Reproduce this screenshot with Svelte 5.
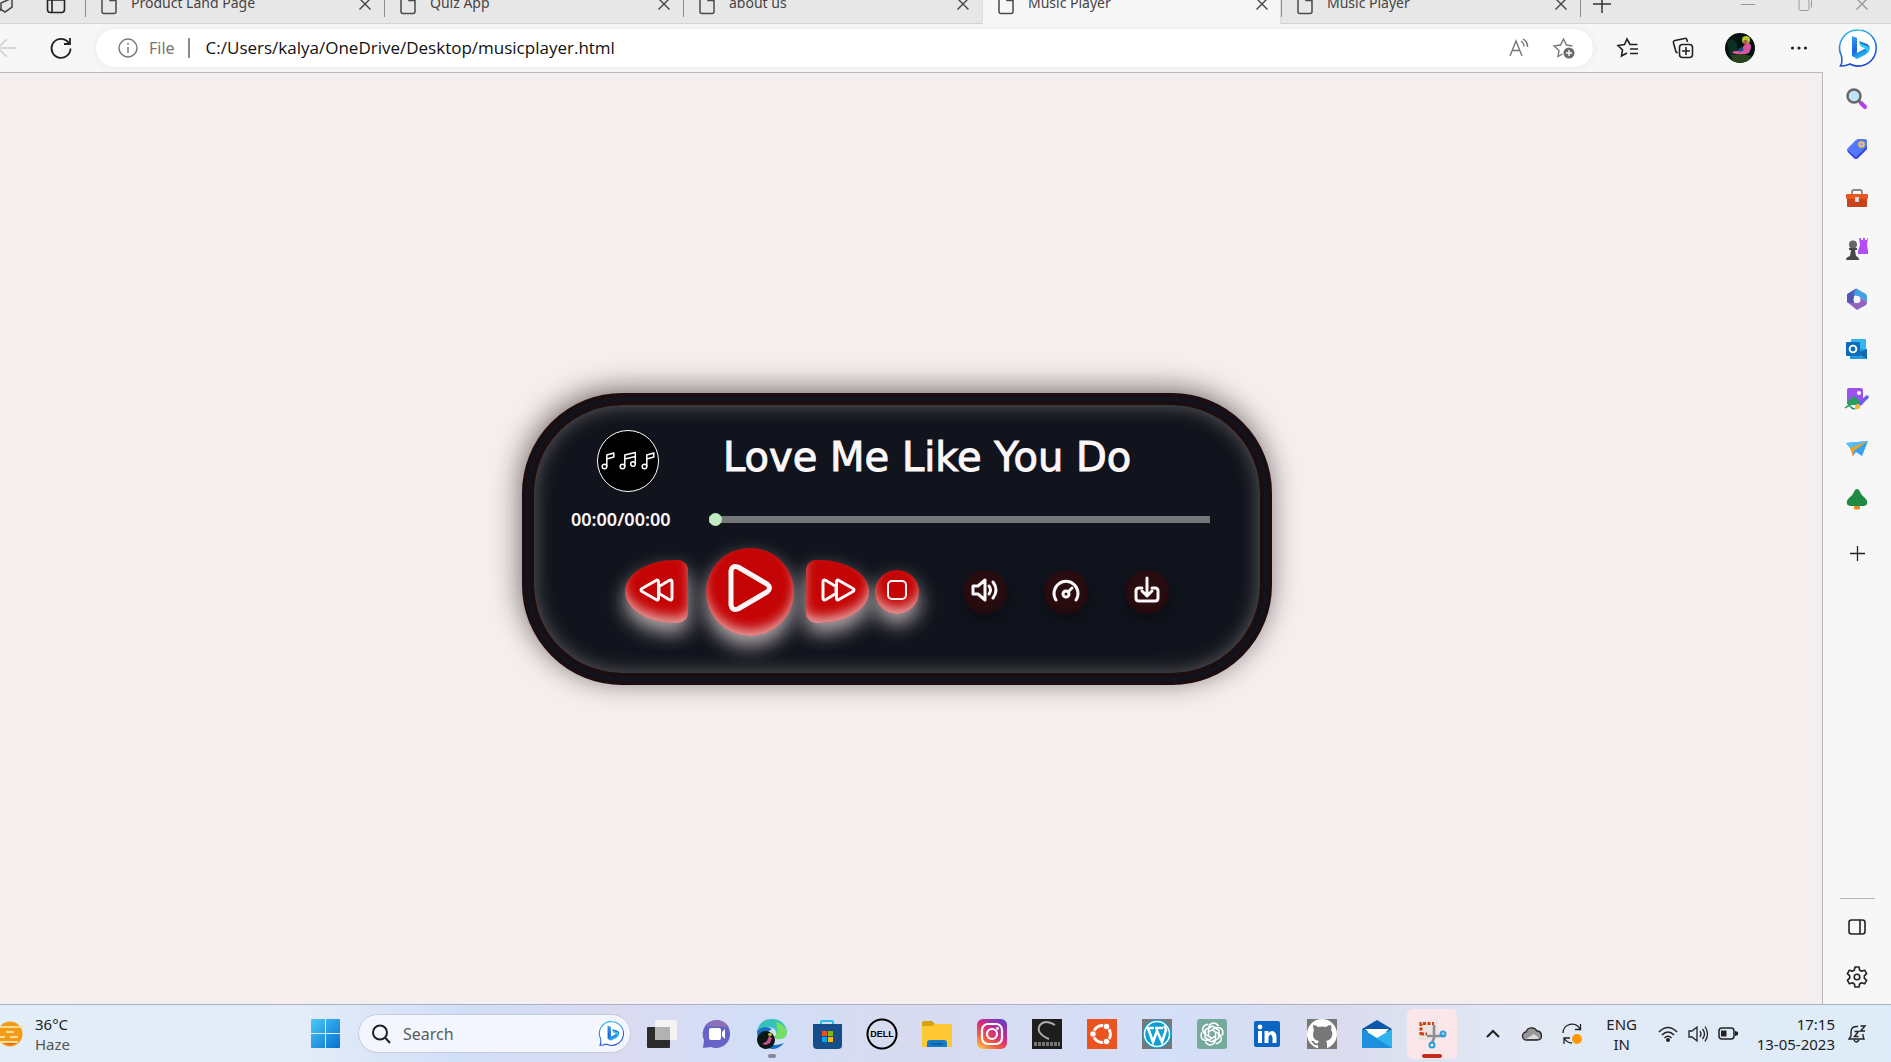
<script>
  const tabs = [
    { title: 'Product Land Page' },
    { title: 'Quiz App' },
    { title: 'about us' },
    { title: 'Music Player', active: true },
    { title: 'Music Player' }
  ];
  let position = $state(0);
</script>

{#snippet bing(size, id)}
  <svg width={size} height={size} viewBox="0 0 38 38">
    <defs>
      <linearGradient id="{id}r" x1="0" y1="0" x2="0.3" y2="1">
        <stop offset="0" stop-color="#2cc4f2" /><stop offset="1" stop-color="#1b48d2" />
      </linearGradient>
      <linearGradient id="{id}b" x1="0" y1="0" x2="0.4" y2="1">
        <stop offset="0" stop-color="#35a2f5" /><stop offset="0.6" stop-color="#1a62e0" /><stop offset="1" stop-color="#2bc0ee" />
      </linearGradient>
    </defs>
    <path d="M19.500 1A18 18 0 1 1 11 35C8 36.500 4 37 1.500 37C3.500 34 3 30 2.500 27A18 18 0 0 1 19.500 1Z" fill="#fff" stroke="url(#{id}r)" stroke-width="1.600" />
    <path d="M13 7l5 2v15l9-5-5-2-2-5 8 3q4 2 2 7-1 2-4 4l-8 4-5-3Z" fill="url(#{id}b)" />
    <path d="M20 14l8 3q3 3 1 7-1-4-5-5.500l-2-1Z" fill="#2fd0e6" />
  </svg>
{/snippet}

{#snippet cross(color)}
  <svg width="14" height="14" viewBox="0 0 14 14" fill="none" stroke={color} stroke-width="1.400"><path d="M1.500 1.500l11 11M12.500 1.500l-11 11" /></svg>
{/snippet}

<div class="desktop">
  <header class="tabstrip">
    <div class="tabstrip-lead">
      <svg width="18" height="20" viewBox="0 0 18 20" fill="none" stroke="#444" stroke-width="1.500"><path d="M1 4l9-3 6 3v9l-7 5-5-3" /><path d="M5 17V9l9-4" /></svg>
      <svg width="20" height="20" viewBox="0 0 20 20" fill="none" stroke="#222" stroke-width="1.600"><rect x="1.500" y="1.500" width="17" height="17" rx="3" /><path d="M6 2v16M2 6h16" /></svg>
    </div>
    {#each tabs as tab}
      <div class="tab" class:active={tab.active}>
        <svg width="18" height="22" viewBox="0 0 18 22" fill="none" stroke="#4a4a4a" stroke-width="1.500"><path d="M3.500 1.500h7l5.500 5.500v11.500a2 2 0 0 1-2 2h-10a2 2 0 0 1-2-2v-15a2 2 0 0 1 1.500-2ZM10 2v5.500h6" /></svg>
        <button class="tab-title">{tab.title}</button>
        <button class="bare" aria-label="Close tab">{@render cross('#444')}</button>
      </div>
    {/each}
    <button class="bare new-tab" aria-label="New tab">
      <svg width="18" height="18" viewBox="0 0 18 18" stroke="#333" stroke-width="1.500"><path d="M9 0v18M0 9h18" /></svg>
    </button>
    <div class="window-buttons">
      <button class="bare" aria-label="Minimize"><svg width="14" height="14" viewBox="0 0 14 14" stroke="#999"><path d="M0 7.500h14" /></svg></button>
      <button class="bare" aria-label="Restore"><svg width="14" height="14" viewBox="0 0 14 14" fill="none" stroke="#999"><rect x="1" y="2.500" width="10" height="11" rx="2" /><path d="M3.500 .5h7a3 3 0 0 1 3 3v7" /></svg></button>
      <button class="bare" aria-label="Close">{@render cross('#999')}</button>
    </div>
  </header>

  <div class="toolbar">
    <button class="bare back" aria-label="Back">
      <svg width="20" height="20" viewBox="0 0 20 20" fill="none" stroke="#ccc" stroke-width="1.500"><path d="M20 10H2M11 1l-9 9 9 9" /></svg>
    </button>
    <button class="bare reload" aria-label="Reload">
      <svg width="22" height="22" viewBox="0 0 22 22" fill="none" stroke="#222" stroke-width="1.800"><path d="M20.500 11.500A9.500 9.500 0 1 1 17 4l3 3" /><path d="M20 1v6h-6" /></svg>
    </button>
    <div class="address">
      <svg width="20" height="20" viewBox="0 0 20 20" fill="none" stroke="#767676" stroke-width="1.400"><circle cx="10" cy="10" r="9" /><path d="M10 9v6M10 5v2" /></svg>
      <span class="scheme">File</span>
      <input class="url" aria-label="Address" value="C:/Users/kalya/OneDrive/Desktop/musicplayer.html" />
      <button class="bare" aria-label="Read aloud">
        <svg width="20" height="20" viewBox="0 0 20 20" fill="none" stroke="#767676" stroke-width="1.400"><path d="M1 18L7 3l6 15M3.500 12.500h7M12 3q3 2 3 5.500M14 1q5 3 4.500 8" /></svg>
      </button>
      <button class="bare" aria-label="Add to favorites">
        <svg width="22" height="22" viewBox="0 0 22 22" fill="none" stroke="#767676" stroke-width="1.400"><path d="M9.500 17L5 19.500l1-6-5-4.500 6.500-1L10.500 2l3 6 6 1" /><circle cx="16" cy="16" r="5.500" fill="#6b6b6b" stroke="none" /><path d="M16 13v6M13 16h6" stroke="#fff" /></svg>
      </button>
    </div>
    <div class="tools">
      <button class="bare" aria-label="Favorites"><svg width="22" height="22" viewBox="0 0 22 22" fill="none" stroke="#222" stroke-width="1.600"><path d="M10 16l-5.500 3 1-6-4.500-4.500 6.500-1L10 2l3 5.500h7.500M13 12h8M13 16.500h8" /></svg></button>
      <button class="bare" aria-label="Collections"><svg width="22" height="22" viewBox="0 0 22 22" fill="none" stroke="#222" stroke-width="1.600"><rect x="7.500" y="7.500" width="13" height="13" rx="3" /><path d="M14 10v8M10 14h8M15.500 5L15 3q-.5-2-2.500-1.500L3 3.500Q1 4 1.500 6l2.500 9 1.500 1" /></svg></button>
      <button class="bare" aria-label="Profile">
        <svg width="30" height="30" viewBox="0 0 30 30"><clipPath id="face"><circle cx="15" cy="15" r="15" /></clipPath><g clip-path="url(#face)"><path fill="#06120f" d="M0 0h30v30H0z" /><path d="M2 8Q8 4 12 10v8l-7 6Z" fill="#0d3026" /><path d="M19 12l4-2q4 1 3 5l-2 5q-7 3-13 1l-4-1 2-2h7Z" fill="#d854a0" /><circle cx="21" cy="7" r="4" fill="#b8c62a" /><circle cx="20.500" cy="9" r="2.300" fill="#a5663d" /><path d="M6 22l12-1 8 2-4 7H8Z" fill="#27431c" /><path d="M12 17l5-3 2 3-4 2Z" fill="#1c4c85" /></g></svg>
      </button>
      <button class="bare" aria-label="Settings and more"><svg width="18" height="18" viewBox="0 0 18 18" fill="#222"><circle cx="2.500" cy="9" r="1.600" /><circle cx="9" cy="9" r="1.600" /><circle cx="15.500" cy="9" r="1.600" /></svg></button>
    </div>
    <button class="bare bing" aria-label="Bing">{@render bing(38, 'top')}</button>
  </div>

  <div class="body">
    <main class="page">
      <section class="player">
        <div class="cover">
          <svg width="54" height="20" viewBox="0 0 54 20" fill="none" stroke="#fff" stroke-width="1.500" stroke-linejoin="round"><circle cx="3.500" cy="15.500" r="2.300" /><path d="M5.800 15.500V4l7-2v4l-7 2" /><circle cx="21.500" cy="15.500" r="2.300" /><circle cx="32" cy="13" r="2.300" /><path d="M23.800 15.500V4l10.500-2.500V13M23.800 8l10.500-2.500" /><circle cx="43.500" cy="15.500" r="2.300" /><path d="M45.800 15.500V4l7-2v4l-7 2" /></svg>
        </div>
        <h1>Love Me Like You Do</h1>
        <span class="time">00:00/00:00</span>
        <input class="seek" type="range" min="0" max="100" bind:value={position} aria-label="Seek" />
        <div class="controls">
          <button class="key rewind" aria-label="Rewind"><svg width="36" height="24" viewBox="0 0 36 24"><path d="M17.500 2.200L3 10.500q-2 1.500 0 3L17.500 21.800q2 .5 2-1.500V3.700q0-2-2-1.500ZM33 4q0-3-3-1.500L20 8.500v7l10 6q3 1.500 3-1.500Z" /></svg></button>
          <button class="key play" aria-label="Play"><svg width="46" height="50" viewBox="0 0 46 50" stroke-width="5"><path d="M4 8v34q1 6 7 4l29-17q5-4 0-8L11 4q-6-2-7 4Z" /></svg></button>
          <button class="key forward" aria-label="Fast forward"><svg width="36" height="24" viewBox="0 0 36 24"><path d="M18.500 2.200L33 10.500q2 1.500 0 3L18.500 21.800q-2 .5-2-1.500V3.700q0-2 2-1.500ZM3 4q0-3 3-1.500L16 8.500v7l-10 6q-3 1.500-3-1.500Z" /></svg></button>
          <button class="key small" aria-label="Stop"><svg width="22" height="22" viewBox="0 0 22 22" stroke-width="2"><rect x="2" y="2" width="18" height="18" rx="4" /></svg></button>
          <div class="extras">
            <button class="key small dim" aria-label="Volume"><svg width="28" height="24" viewBox="0 0 28 24"><path d="M2 8h5l7-6v20l-7-6H2ZM18 8q3 4 0 8M22 4q6 8 0 16" /></svg></button>
            <button class="key small dim" aria-label="Speed"><svg width="28" height="24" viewBox="0 0 28 24"><path d="M4 22A12 12 0 1 1 24 22M16 14l4-4" /><circle cx="14" cy="16" r="3" /></svg></button>
            <button class="key small dim" aria-label="Download"><svg width="26" height="28" viewBox="0 0 26 28"><path d="M8 12H5q-3 0-3 3v7q0 3 3 3h16q3 0 3-3v-7q0-3-3-3h-3M13 2v17M8 15l5 5 5-5" /></svg></button>
          </div>
        </div>
      </section>
    </main>

    <aside class="sidebar">
      <button class="bare" aria-label="Search"><svg width="22" height="22" viewBox="0 0 22 22"><path d="M14.500 14.500l4.500 4.500" stroke="#b83df0" stroke-width="4" stroke-linecap="round" /><path d="M12 12l3 3" stroke="#777" stroke-width="2.500" /><circle cx="8" cy="8" r="6.500" fill="#bfe3fa" stroke="#666" stroke-width="2.400" /></svg></button>
      <button class="bare" aria-label="Shopping"><svg width="22" height="22" viewBox="0 0 22 22"><path d="M12 1h7q2 0 2 2v7q0 1-1 2l-8 8q-2 2-4 0l-6-6q-2-2 0-4l8-8Z" fill="#5478ff" /><path d="M1.500 12l8.500 7 11-11v3l-9 9q-2 2-4 0l-6-6Z" fill="#3a48e2" /><circle cx="15.500" cy="6.500" r="2.500" fill="#9aa8ff" stroke="#ffc52b" stroke-width="1.600" /></svg></button>
      <button class="bare" aria-label="Tools"><svg width="24" height="20" viewBox="0 0 24 20"><path d="M7 6V3q0-2 2-2h6q2 0 2 2v3" fill="none" stroke="#888" stroke-width="1.800" /><rect x="1" y="5" width="22" height="5" rx="1" fill="#e6581f" /><path d="M2 10h20v7q0 1-1 1H3q-1 0-1-1Z" fill="#c8421a" /><rect x="10" y="8" width="4" height="5" rx="1" fill="#ddd" /></svg></button>
      <button class="bare" aria-label="Games"><svg width="24" height="24" viewBox="0 0 24 24"><path d="M14 1h2v2h2V1h2v2h2V1h1l-1 7 1 6v3H13v-3l2-6Z" fill="#b44df5" /><circle cx="8" cy="7.500" r="4" fill="#666" /><path d="M4 11h8v2h-2l1 6q3 1 3 4H1q0-3 4-4l1-6H4Z" fill="#484848" /></svg></button>
      <button class="bare" aria-label="Microsoft 365"><svg width="22" height="22" viewBox="0 0 22 22"><path d="M1 6l9-5.500 5 3L8 8v7l-2 2-5-3Z" fill="#5257b5" /><path d="M10 .5l10 5.500q1 1 1 3v5l-7-5-6-2V5Z" fill="#3fa0e4" /><path d="M1 14l5 1 8-1V9l7 5q0 2-1 3l-9 5Z" fill="#9264c0" /><circle cx="11" cy="11.500" r="3.500" fill="#f7f7f7" /></svg></button>
      <button class="bare" aria-label="Outlook"><svg width="22" height="22" viewBox="0 0 22 22"><path d="M5 1h15v10H5Z" fill="#35b6ee" /><path d="M4 11h17v10H4Z" fill="#2199e0" /><path d="M21 11v10L12 15Z" fill="#1666aa" /><rect y="4" width="14" height="14" rx="1" fill="#0f6cbd" /><circle cx="7" cy="11" r="3.400" fill="none" stroke="#fff" stroke-width="1.900" /></svg></button>
      <button class="bare" aria-label="Image creator"><svg width="24" height="24" viewBox="0 0 24 24"><rect x="2" y="1" width="16" height="17" rx="2" fill="#9b52ee" /><path d="M2 15l7-6 8 7-3 2H3Z" fill="#23a05c" /><circle cx="14" cy="6" r="2" fill="#fff" /><path d="M0 21q5-4 6-1 2 3 5 1" fill="none" stroke="#269b63" stroke-width="1.500" /><path d="M15 17l7-7" stroke="#6d5bef" stroke-width="3.500" stroke-linecap="round" /><path d="M10 22q0-5 3-5t2 4q-2 2-5 1Z" fill="#f5b53c" /></svg></button>
      <button class="bare" aria-label="Drop"><svg width="22" height="18" viewBox="0 0 22 18"><path d="M0 3l22-2-6 15-6-4-3 4-2-7Z" fill="#389ff5" /><path d="M4 8L22 1 8 11l-1 6Z" fill="#eba423" /><path d="M0 3l22-2L4 8Z" fill="#58bdf8" /></svg></button>
      <button class="bare" aria-label="E-tree"><svg width="22" height="22" viewBox="0 0 22 22"><path d="M8 15h6v6q-3 1-6 0Z" fill="#e88b20" /><path d="M9 2q2-2 4 0 2 5 6 8 3 3 2 6-1 2-5 2H6q-4 0-5-2-1-3 2-6 4-3 6-8Z" fill="#208a42" /></svg></button>
      <button class="bare add" aria-label="Customize"><svg width="15" height="15" viewBox="0 0 15 15" stroke="#222" stroke-width="1.300"><path d="M7.500 0v15M0 7.500h15" /></svg></button>
      <hr />
      <button class="bare" aria-label="Hide sidebar"><svg width="18" height="16" viewBox="0 0 18 16" fill="none" stroke="#222" stroke-width="1.600"><rect x="1" y="1" width="16" height="14" rx="2.500" /><path d="M12 1v14" /></svg></button>
      <button class="bare" aria-label="Settings"><svg width="22" height="22" viewBox="0 0 22 22" fill="none" stroke="#222" stroke-width="1.600" stroke-linejoin="round"><path d="M9 1h4l.6 3 2 1.200 3-1 2 3.400-2.300 2.200v2.400l2.300 2.200-2 3.400-3-1-2 1.200-.6 3H9l-.6-3-2-1.200-3 1-2-3.400 2.300-2.200V9.800L1.400 7.600l2-3.400 3 1 2-1.200Z" /><circle cx="11" cy="11" r="2.800" /></svg></button>
    </aside>
  </div>

  <footer class="taskbar">
    <div class="weather">
      <svg width="30" height="28" viewBox="0 0 30 28"><circle cx="16" cy="14" r="12.500" fill="#f39a17" /><path d="M7 21a12.500 12.500 0 0 0 18 0Z" fill="#e2660f" /><path d="M0 7h29M12 12h8M2 17h9M16 17h8M6 22h18" stroke="#fbdc96" stroke-width="1.800" /></svg>
      <div><p>36°C</p><p class="soft">Haze</p></div>
    </div>
    <button class="bare start" aria-label="Start"><svg width="29" height="29" viewBox="0 0 29 29"><defs><linearGradient id="win" x1="0" y1="0" x2="1" y2="1"><stop offset="0" stop-color="#4cc9f9" /><stop offset="1" stop-color="#0670cd" /></linearGradient></defs><path fill="url(#win)" d="M1 0h13v14H0V1q0-1 1-1ZM15 0h13q1 0 1 1v13H15ZM0 15h14v14H1q-1 0-1-1ZM15 15h14v13q0 1-1 1H15Z" /></svg></button>
    <label class="search">
      <svg width="19" height="20" viewBox="0 0 19 20" fill="none" stroke="#222" stroke-width="2"><circle cx="8" cy="8.500" r="7" /><path d="M13 13.500l5 5.500" /></svg>
      <input type="search" placeholder="Search" aria-label="Search" />
      {@render bing(25, 'search')}
    </label>
    <div class="apps">
      <button class="app" aria-label="Task view"><svg width="30" height="30" viewBox="0 0 30 30"><rect y="8" width="23" height="21" rx="1" fill="#2c2c2c" /><rect x="8" y="1" width="22" height="20" rx="1" fill="#f4f4f4" /><path d="M8 8h15v13H8Z" fill="#b2b2b2" /></svg></button>
      <button class="app" aria-label="Chat"><svg width="30" height="30" viewBox="0 0 30 30"><path d="M15 1a14 14 0 1 1-6 27L1 29l1-8A14 14 0 0 1 15 1Z" fill="#6562c8" /><path d="M4 7q4-6 11-6t12 7Z" fill="#8e6fb9" /><rect x="7" y="9" width="12" height="12" rx="2" fill="#fff" /><path d="M20 13l3-3v10l-3-3Z" fill="#fff" /></svg></button>
      <button class="app open" aria-label="Edge"><svg width="30" height="30" viewBox="0 0 30 30"><path d="M0 12Q3 0 15 0t15 12q0 9-10 8-3-1-1-4 1-8-8-8-7 0-11 4Z" fill="#35c2bb" /><path d="M19 3q11 3 11 11-2 7-10 6-3-1-1-4 2-6 0-13Z" fill="#74df62" /><path d="M0 12q7-7 15-2-8 4-5 12 5 7 17 2-5 6-12 6Q0 28 0 12Z" fill="#176fc3" /><circle cx="9" cy="21" r="9" fill="#0b1713" /><path d="M5 25l5-3 2-5 3 2-2 5-4 2Z" fill="#c9508f" /><circle cx="13" cy="15.500" r="1.800" fill="#b6c432" /></svg></button>
      <button class="app" aria-label="Microsoft Store"><svg width="30" height="30" viewBox="0 0 30 30"><path d="M9 6V3q0-1 1-1h10q1 0 1 1v3" fill="none" stroke="#25bdf1" stroke-width="2" /><path d="M1 5h29v21q0 4-4 4H5q-4 0-4-4Z" fill="#174d88" /><path d="M10 12h5v5h-5Z" fill="#f25022" /><path d="M16 12h5v5h-5Z" fill="#7fba00" /><path d="M10 18h5v5h-5Z" fill="#00a4ef" /><path d="M16 18h5v5h-5Z" fill="#ffb900" /></svg></button>
      <button class="app dell" aria-label="Dell">DELL</button>
      <button class="app" aria-label="File Explorer"><svg width="30" height="30" viewBox="0 0 30 30"><path d="M0 4q0-2 2-2h8l3 3h15q2 0 2 2v3H0Z" fill="#dca008" /><path d="M0 7h10l3-2h17v23H0Z" fill="#fec934" /><path d="M5 28v-4q0-3 3-3h14q3 0 3 3v4Z" fill="#147cc8" /><path d="M9 25h12" stroke="#0a559a" stroke-width="1.500" /></svg></button>
      <button class="app" aria-label="Instagram"><svg width="30" height="30" viewBox="0 0 30 30"><defs><linearGradient id="ig" x1="0.100" y1="1" x2="0.800" y2="0"><stop offset="0" stop-color="#ffc64d" /><stop offset="0.300" stop-color="#f4603f" /><stop offset="0.600" stop-color="#d02a83" /><stop offset="1" stop-color="#6a3cc8" /></linearGradient></defs><rect width="30" height="30" rx="6" fill="url(#ig)" /><g fill="none" stroke="#fff" stroke-width="2.200"><rect x="5" y="5" width="20" height="20" rx="6" /><circle cx="15" cy="15" r="5" /></g><circle cx="20.500" cy="9.500" r="1.400" fill="#fff" /></svg></button>
      <button class="app" aria-label="Cyber"><svg width="30" height="30" viewBox="0 0 30 30"><path fill="#1d1d1d" d="M0 0h30v30H0z" /><path d="M23 6Q13 0 8 6q-5 8 9 14" fill="none" stroke="#aaa" stroke-width="2" /><path d="M2 25h26" stroke="#777" stroke-width="4" stroke-dasharray="3 1" /></svg></button>
      <button class="app" aria-label="Ubuntu"><svg width="30" height="30" viewBox="0 0 30 30"><path fill="#e95420" d="M0 0h30v30H0z" /><circle cx="15" cy="15" r="8.500" fill="none" stroke="#fff" stroke-width="3" /><g fill="#fff" stroke="#e95420"><circle cx="6" cy="15" r="3.300" /><circle cx="19.500" cy="7.500" r="3.300" /><circle cx="19.500" cy="22.500" r="3.300" /></g></svg></button>
      <button class="app" aria-label="WordPress"><svg width="30" height="30" viewBox="0 0 30 30"><path fill="#777" d="M0 0h30v30H0z" /><circle cx="15" cy="15" r="14.500" fill="#109fd2" /><circle cx="15" cy="15" r="12.500" fill="none" stroke="#fff" stroke-width="1.500" /><path d="M4 9h8M13 9h8M6 9l5 14 4-11 5 11 4-12q0-2-2-4" fill="none" stroke="#fff" stroke-width="2.600" /></svg></button>
      <button class="app" aria-label="ChatGPT"><svg width="30" height="30" viewBox="0 0 30 30"><rect width="30" height="30" rx="3" fill="#75a99c" /><g fill="none" stroke="#fff" stroke-width="1.500">{#each [0, 60, 120, 180, 240, 300] as turn}<path transform="rotate({turn} 15 15)" d="M11.500 17v-7.500q.5-4.500 4.500-5.500 3.500 0 5.500 3M11.500 9.500l4-2.300 6 3.400" />{/each}</g></svg></button>
      <button class="app" aria-label="LinkedIn"><svg width="28" height="28" viewBox="0 0 28 28"><rect x="1" y="1" width="26" height="26" rx="2" fill="#0a66c2" /><g fill="#fff"><circle cx="7" cy="7" r="2.400" /><path d="M5 11h4v12H5ZM11.500 11h4v2q4-4 7 0 1 2 1 4v6h-4v-6q-2-5-4 0v6h-4Z" /></g></svg></button>
      <button class="app" aria-label="GitHub"><svg width="30" height="30" viewBox="0 0 30 30"><path fill="#777" d="M0 0h30v30H0z" /><circle cx="15" cy="15" r="15" fill="#fff" /><path d="M6 6q3 0 5 2 4-1 8 0 2-2 5-2 1 3 0 5 2 2 1 6-1 4-6 5 1 1 1 3v5h-9v-4q-4 1-5-2l-2-2q3-1 4 2 2 1 3 0 0-1 1-2-6-1-6-6 0-3 1-5-1-2-1-5Z" fill="#777" /></svg></button>
      <button class="app" aria-label="Mail"><svg width="30" height="30" viewBox="0 0 30 30"><path d="M0 10L15 1l15 9v3H0Z" fill="#0c57a8" /><path d="M3 10h24l-9 9h-6Z" fill="#fff" /><path d="M0 10l15 9 15-9v19H0Z" fill="#2fb4ef" /><path d="M0 10l30 19H0Z" fill="#1c90df" /></svg></button>
      <button class="app snip" aria-label="Snipping Tool"><svg width="30" height="30" viewBox="0 0 30 30"><rect width="20" height="20" x="1" y="1" rx="2" fill="#ece4e4" /><path d="M4 16V4.500h13M4 15h6" fill="none" stroke="#d0400f" stroke-width="3" stroke-dasharray="3 1.500" /><path d="M17 6v13l-2 5M10 17h13l4-1" fill="none" stroke="#8a8f96" stroke-width="2.600" /><g fill="none" stroke="#21a0e4" stroke-width="2"><circle cx="26" cy="15" r="2.500" /><circle cx="15" cy="26" r="2.500" /></g></svg></button>
    </div>
    <div class="tray">
      <button class="bare" aria-label="Hidden icons"><svg width="14" height="9" viewBox="0 0 14 9" fill="none" stroke="#222" stroke-width="2"><path d="M1 8l6-6 6 6" /></svg></button>
      <button class="bare" aria-label="OneDrive"><svg width="20" height="14" viewBox="0 0 20 14"><path d="M5 13a4 4 0 0 1-1-8 6 6 0 0 1 11-1q4 0 4.400 4.500T15 13Z" fill="#989898" stroke="#222" stroke-width="1.300" /><path d="M4 12l8-5 5 4q-1 1-3 1Z" fill="#ddd" /></svg></button>
      <button class="bare" aria-label="Updates"><svg width="20" height="20" viewBox="0 0 20 20" fill="none" stroke="#222" stroke-width="1.300"><path d="M1 9a9 9 0 0 1 17-4M18.500 0v5.500H13M2 20v-6h6M2 14q3 5 8 5" /><circle cx="15" cy="15" r="5" fill="#ff9800" stroke="none" /></svg></button>
      <button class="bare lang">ENG<br />IN</button>
      <button class="bare status" aria-label="Network, sound and battery">
        <svg width="20" height="16" viewBox="0 0 20 16" fill="none" stroke="#222" stroke-width="1.600"><path d="M1 6q9-9 18 0M4 9q6-6 12 0M6.500 12q3.500-3.500 7 0" /><circle cx="10" cy="14" r="1.200" fill="#222" /></svg>
        <svg width="20" height="18" viewBox="0 0 20 18" fill="none" stroke="#222" stroke-width="1.300"><path d="M1 6h3l5-4v14l-5-4H1ZM12 6q2 3 0 6M14.500 4q4 5 0 10M17 1.500q5 7.500 0 15" /></svg>
        <svg width="20" height="14" viewBox="0 0 20 14"><rect x="1" y="1" width="15" height="11" rx="3" fill="none" stroke="#222" stroke-width="1.500" /><path d="M3 3.500h5.500v6H3Z" fill="#222" /><path d="M17 4l3 1v3l-3 1Z" fill="#222" /></svg>
      </button>
      <button class="bare clock">17:15<br />13-05-2023</button>
      <button class="bare" aria-label="Notifications"><svg width="18" height="18" viewBox="0 0 18 18" fill="none" stroke="#222" stroke-width="1.400"><path d="M10 1.500Q3 1 3 7v4l-2 3h15l-1-3V9M6 15q2 4 5 0M6.500 6.500h4l-4 5h4M12.500 1H17l-4.500 5H17" /></svg></button>
    </div>
  </footer>
</div>

<style>
  :global(body) { margin: 0; }
  * { box-sizing: border-box; }
  .desktop {
    display: flex;
    flex-direction: column;
    min-height: 100vh;
    overflow: hidden;
    font-family: "Noto Sans", "Open Sans", sans-serif;
    font-size: 16px;
    color: #222;
    background: #f7f7f7;
  }
  button, input { font: inherit; color: inherit; }
  svg { display: block; flex: none; overflow: visible; }
  .bare { display: flex; align-items: center; justify-content: center; padding: 0; border: 0; background: none; }

  .tabstrip { display: flex; align-items: stretch; height: 40px; margin-top: -16px; background: #e7e7e7; box-shadow: inset 0 -1px #d2d2d2; }
  .tabstrip-lead { display: flex; align-items: center; gap: 32px; width: 85px; flex: none; }
  .tabstrip-lead svg:first-child { margin-left: -4px; }
  .tab { display: flex; align-items: center; flex: 0 1 299px; gap: 13px; padding: 0 12px 0 15px; background: linear-gradient(#8c8c8c, #8c8c8c) left top / 1px 33px no-repeat; color: #444; }
  .tab.active { background: #f7f7f7; box-shadow: inset 1px 0 #ddd, inset -1px 0 #ddd; }
  .tab-title { flex: 1; padding: 0 0 2px; border: 0; background: none; text-align: left; font-size: 14px; line-height: 18px; }
  .new-tab { width: 46px; padding-right: 2px; background: linear-gradient(#8c8c8c, #8c8c8c) left top / 1px 33px no-repeat; }
  .window-buttons { display: flex; gap: 43px; margin-left: auto; padding-right: 22px; }

  .toolbar { display: flex; align-items: center; height: 48px; flex: none; }
  .back { width: 20px; margin-left: -4px; }
  .reload { margin-left: 34px; }
  .address { display: flex; align-items: center; flex: 1; height: 38px; margin-left: 24px; padding: 0 18px 0 22px; border-radius: 19px; background: #fff; box-shadow: 0 0 6px #e6e6e6; }
  .scheme { margin-left: 11px; padding-right: 13px; border-right: 2px solid #8a8a8a; line-height: 20px; color: #767676; }
  .url { flex: 1; min-width: 0; margin-left: 16px; padding: 0; border: 0; outline: 0; background: none; color: #111; font-family: "Open Sans", sans-serif; font-size: 17px; line-height: 24px; }
  .address .bare + .bare { margin-left: 24px; }
  .tools { display: flex; align-items: center; gap: 33px; margin: 0 31px 0 24px; }
  .tools .bare:nth-child(3) { margin: 0 2px 0 -2px; }
  .bing { width: 38px; margin-right: 14px; }

  .body { display: flex; flex: 1; }
  .page { display: flex; flex: 1; align-items: center; justify-content: center; padding: 0 28px 0 0; border: 1px solid #b9b7ba; border-width: 1px 1px 0 0; background: #f4eeee; }
  .player {
    display: grid;
    grid-template-columns: 114px 1fr;
    gap: 16px 24px;
    width: 750px;
    padding: 25px 50px 37px 37px;
    border: 12px double #1c0d11;
    border-radius: 100px;
    background: #11141d;
    box-shadow: -2px -4px 28px rgba(40, 20, 20, 0.6), inset 0 0 20px #646260;
    color: #fbf7f8;
    font-family: "DejaVu Sans", sans-serif;
  }
  .cover { display: grid; place-items: center; justify-self: center; width: 62px; height: 62px; border: 1px solid #fff; border-radius: 50%; background: #000; }
  h1 { margin: 0; padding-left: 14px; font-size: 40px; line-height: 54px; font-weight: 400; white-space: nowrap; -webkit-text-stroke: 1px #fbf7f8; }
  .time { height: 24px; font-family: "Noto Sans", sans-serif; font-size: 18px; line-height: 22px; font-weight: 600; white-space: nowrap; }
  .seek { align-self: center; width: 100%; height: 7px; margin: 0; appearance: none; background: #747777; }
  .seek::-webkit-slider-thumb { appearance: none; width: 13px; height: 13px; border-radius: 50%; background: #bfebbf; }
  .controls { grid-column: 1 / -1; display: flex; align-items: center; gap: 6px; padding-left: 54px; }
  .key {
    display: grid;
    place-items: center;
    flex: none;
    width: 63px;
    height: 63px;
    padding: 0 0 4px;
    border: 0;
    background: #c50505;
    box-shadow: 0 10px 20px rgba(250, 235, 235, 0.7), inset 0 -8px 12px -2px rgba(240, 230, 230, 0.7);
  }
  .key svg { fill: none; stroke: #fbf7f8; stroke-linejoin: round; stroke-linecap: round; }
  .rewind svg, .forward svg, .dim svg { stroke-width: 3; }
  .rewind { border-radius: 50px 10px 10px 50px / 32px 10px 10px 32px; }
  .forward { border-radius: 10px 50px 50px 10px / 10px 32px 32px 10px; }
  .play { width: 88px; height: 88px; margin: 0 6px 0 12px; padding: 0 0 8px; border-radius: 50%; }
  .small { width: 44px; height: 44px; border-radius: 50%; }
  .dim { background: #2a0d10; box-shadow: 0 6px 14px #0b0d14, inset 0 -4px 8px #210b0e; }
  .extras { display: flex; gap: 37px; margin-left: 38px; }

  .sidebar { display: flex; flex-direction: column; width: 68px; flex: none; padding: 2px 0; }
  .sidebar .bare { height: 50px; }
  .sidebar .add { margin-top: 4px; }
  hr { width: 35px; margin: auto auto 3px; border: 0; border-top: 1px solid #b5b5b5; }

  .taskbar { display: flex; align-items: center; height: 58px; flex: none; border-top: 1px solid #abb0c2; background: linear-gradient(90deg, #e1edf7 0%, #e3ecf7 16%, #d1dff8 24%, #dadbf1 33%, #d2def7 40%, #d8dbef 48%, #d4dff8 62%, #dadced 71%, #e2e9f5 80%, #deecf9 100%); }
  .weather { display: flex; align-items: center; gap: 11px; width: 311px; flex: none; margin-left: -6px; line-height: 20px; font-size: 15px; }
  .weather p { margin: 0; }
  .soft { color: #555; }
  .search { display: flex; align-items: center; flex: none; width: 273px; height: 39px; margin: 0 14px 0 18px; padding: 0 6px 0 13px; border: 1px solid #c3cbdc; border-radius: 20px; background: #f3f6fe; }
  .search input { flex: 1; min-width: 0; margin-left: 12px; padding: 0; border: 0; background: none; outline: 0; }
  .search input::placeholder { color: #5a5a5a; }
  .start { margin-left: 6px; }
  .apps { display: flex; gap: 5px; margin-left: -8px; }
  .app { position: relative; display: grid; place-items: center; width: 50px; height: 50px; padding: 0; border: 0; border-radius: 6px; background: none; }
  .open::after, .snip::after { content: ""; position: absolute; bottom: 1px; width: 8px; height: 4px; border-radius: 2px; background: #858a96; }
  .snip { background: #fbe6ea; }
  .snip::after { width: 20px; background: #c42b1c; }
  .dell { font: 700 9px "Liberation Sans", sans-serif; color: #000; background: radial-gradient(circle, transparent 13px, #000 14px, #000 15px, transparent 16px); }
  .tray { display: flex; align-items: center; gap: 20px; margin-left: auto; padding-right: 25px; font-size: 15px; line-height: 20px; }
  .tray .bare:first-child { margin-right: 2px; }
  .lang { width: 36px; margin: 0 -2px 0 2px; }
  .status { gap: 10px; }
  .clock { display: block; text-align: right; margin: 0 -7px 0 -1px; }
</style>
